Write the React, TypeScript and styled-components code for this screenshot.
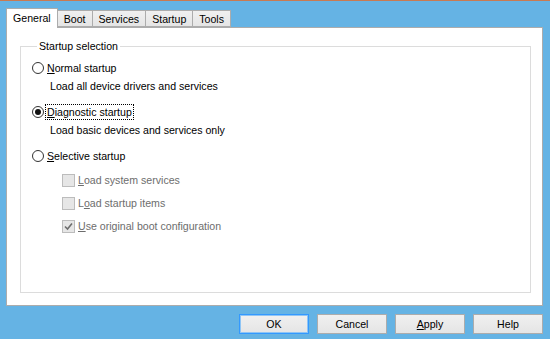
import React from 'react';
import styled, { createGlobalStyle } from 'styled-components';

const GlobalStyle = createGlobalStyle`
  html, body {
    margin: 0;
    padding: 0;
    background: #65b3e4;
  }
  body {
    font-family: "Liberation Sans", Arial, sans-serif;
    font-size: 10.6px;
    color: #000;
  }
`;

// Window body (blue Win8 frame)
const Frame = styled.div`
  width: 550px;
  height: 339px;
  box-sizing: border-box;
  background: #65b3e4;
  border-top: 1px solid #c97a52;
  display: flex;
  flex-direction: column;
`;

const TabStrip = styled.div`
  display: flex;
  align-items: flex-end;
  padding-left: 6px;
  margin-top: 6px;
  height: 20px;
  position: relative;
  z-index: 1;
`;

const Tab = styled.div<{ $active?: boolean }>`
  box-sizing: border-box;
  height: ${({ $active }) => ($active ? '20px' : '17px')};
  margin-bottom: ${({ $active }) => ($active ? '-1px' : '0')};
  padding: ${({ $active }) => ($active ? '3px 6px 0 6px' : '2px 6px 0 6px')};
  background: ${({ $active }) => ($active ? '#fff' : 'linear-gradient(#f0f0f0, #e5e5e5)')};
  border: 1px solid #acacac;
  border-bottom: ${({ $active }) => ($active ? 'none' : '1px solid #acacac')};
  margin-left: ${({ $active }) => ($active ? '0' : '-1px')};
  white-space: nowrap;
  &:first-child {
    margin-left: 0;
  }
`;

const Panel = styled.div`
  margin: 0 7px 0 6px;
  height: 279px;
  box-sizing: border-box;
  background: #fff;
  border: 1px solid #acacac;
  padding: 12px 11px 12px 13px;
  display: flex;
`;

const Group = styled.fieldset`
  flex: 1;
  margin: 0;
  padding: 4px 0 0 11px;
  border: 1px solid #dcdcdc;
  display: flex;
  flex-direction: column;
`;

const Legend = styled.legend`
  padding: 0 2px;
  margin-left: 5px;
`;

const Option = styled.div`
  display: flex;
  align-items: center;
  height: 14px;
`;

const OptionBlock = styled.div<{ $gap: number }>`
  display: flex;
  flex-direction: column;
  margin-top: ${({ $gap }) => $gap}px;
`;

const Radio = styled.span<{ $checked?: boolean }>`
  box-sizing: border-box;
  width: 12px;
  height: 12px;
  border-radius: 50%;
  border: 1px solid #333;
  background: #fff;
  display: inline-flex;
  align-items: center;
  justify-content: center;
  margin-right: 2px;
  &::after {
    content: '';
    display: ${({ $checked }) => ($checked ? 'block' : 'none')};
    width: 6px;
    height: 6px;
    border-radius: 50%;
    background: #111;
  }
`;

const Label = styled.span<{ $focus?: boolean }>`
  outline: ${({ $focus }) => ($focus ? '1px dotted #000' : 'none')};
  padding: 0 1px;
  line-height: 14px;
`;

const Desc = styled.div`
  margin: 4px 0 0 18px;
  line-height: 14px;
`;

const CheckList = styled.div`
  display: flex;
  flex-direction: column;
  gap: 9px;
  padding-left: 30px;
  margin-top: 10px;
`;

const CheckRow = styled.div`
  display: flex;
  align-items: center;
  height: 14px;
  color: #6d6d6d;
`;

const Box = styled.span`
  box-sizing: border-box;
  width: 13px;
  height: 13px;
  border: 1px solid #bcbcbc;
  background: #e6e6e6;
  margin-right: 3px;
  display: inline-flex;
  align-items: center;
  justify-content: center;
`;

const ButtonRow = styled.div`
  display: flex;
  justify-content: flex-end;
  gap: 8px;
  padding: 8px 7px 0 0;
`;

const Button = styled.button<{ $default?: boolean }>`
  width: 70px;
  height: 20px;
  box-sizing: border-box;
  padding: 0;
  font: inherit;
  color: #000;
  background: linear-gradient(#f0f0f0, #e5e5e5);
  border: 1px solid ${({ $default }) => ($default ? '#3399ff' : '#acacac')};
  box-shadow: ${({ $default }) => ($default ? 'inset 0 0 0 1px #8fc5f5' : 'none')};
`;

const U = styled.span`
  text-decoration: underline;
`;

const Check = () => (
  <svg width="9" height="9" viewBox="0 0 9 9">
    <path d="M1 4.5 L3.5 7 L8 1.5" fill="none" stroke="#6d6d6d" strokeWidth="1.6" />
  </svg>
);

export default function App() {
  return (
    <Frame>
      <GlobalStyle />
      <TabStrip>
        <Tab $active>General</Tab>
        <Tab>Boot</Tab>
        <Tab>Services</Tab>
        <Tab>Startup</Tab>
        <Tab>Tools</Tab>
      </TabStrip>
      <Panel>
        <Group>
          <Legend>Startup selection</Legend>
          <OptionBlock $gap={5}>
            <Option>
              <Radio />
              <Label><U>N</U>ormal startup</Label>
            </Option>
            <Desc>Load all device drivers and services</Desc>
          </OptionBlock>
          <OptionBlock $gap={12}>
            <Option>
              <Radio $checked />
              <Label $focus><U>D</U>iagnostic startup</Label>
            </Option>
            <Desc>Load basic devices and services only</Desc>
          </OptionBlock>
          <OptionBlock $gap={12}>
            <Option>
              <Radio />
              <Label><U>S</U>elective startup</Label>
            </Option>
          </OptionBlock>
          <CheckList>
            <CheckRow>
              <Box />
              <span><U>L</U>oad system services</span>
            </CheckRow>
            <CheckRow>
              <Box />
              <span>L<U>o</U>ad startup items</span>
            </CheckRow>
            <CheckRow>
              <Box><Check /></Box>
              <span><U>U</U>se original boot configuration</span>
            </CheckRow>
          </CheckList>
        </Group>
      </Panel>
      <ButtonRow>
        <Button $default>OK</Button>
        <Button>Cancel</Button>
        <Button><U>A</U>pply</Button>
        <Button>Help</Button>
      </ButtonRow>
    </Frame>
  );
}
